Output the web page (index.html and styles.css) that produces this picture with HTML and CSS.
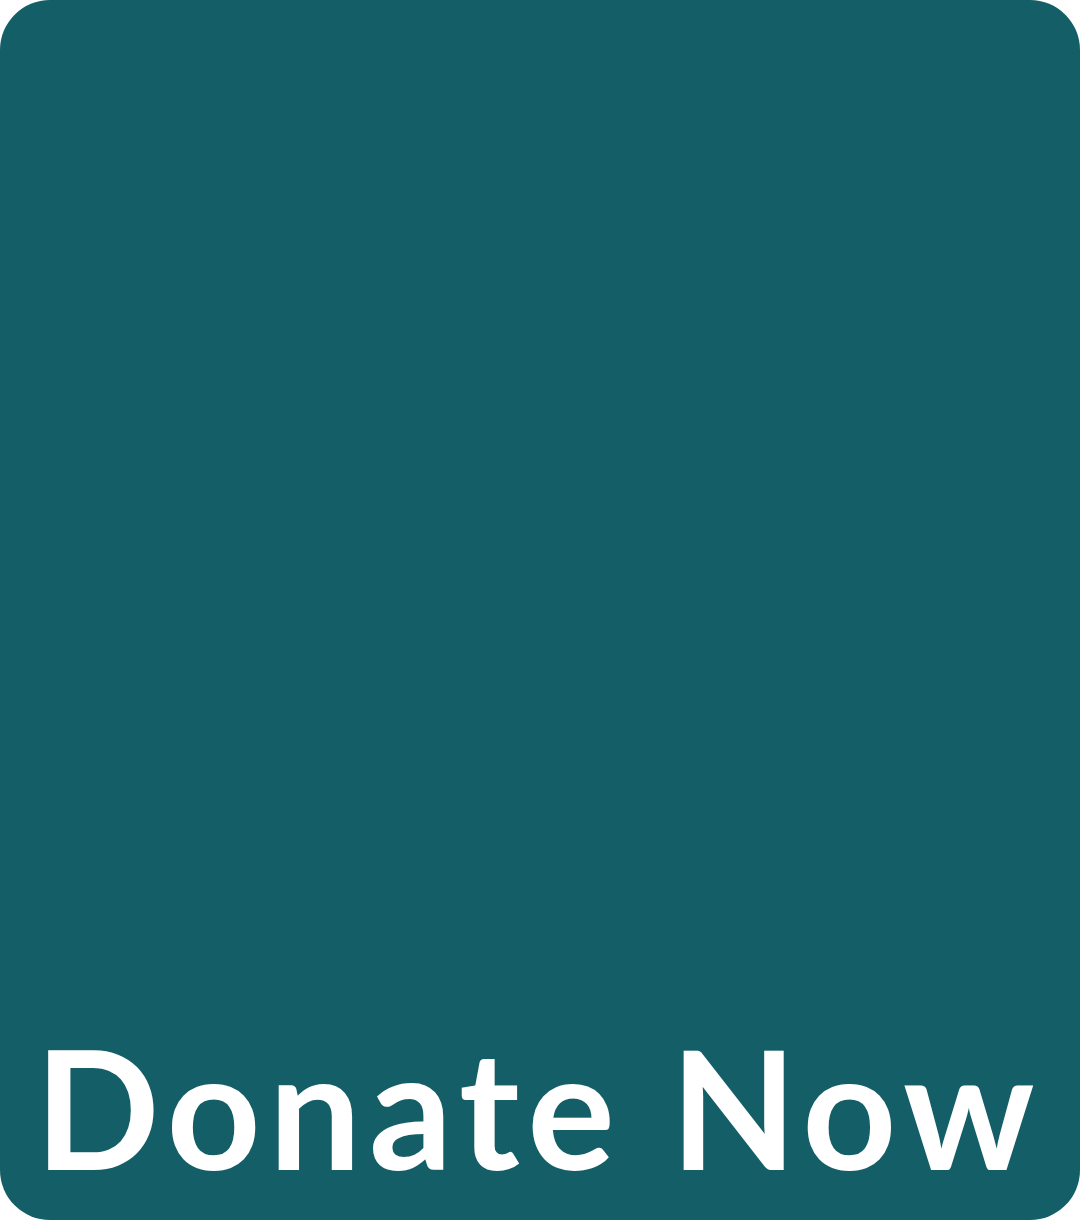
FILE: index.html
```html
<!DOCTYPE html>
<html lang="en">
<head>
<meta charset="utf-8">
<title>Donate Now</title>
<link rel="stylesheet" href="styles.css">
</head>
<body>
<main class="card">
  <h1 class="label">Donate Now</h1>
</main>
</body>
</html>
```
FILE: styles.css
```css
html, body {
  margin: 0;
  padding: 0;
  background: #ffffff;
}
.card {
  box-sizing: border-box;
  width: 1080px;
  height: 1220px;
  background: #135e67;
  border-radius: 50px;
  display: flex;
  flex-direction: column;
  justify-content: flex-end;
  padding: 0 0 31px 35px;
}
.label {
  margin: 0;
  font-family: "Lato", "Noto Sans", sans-serif;
  font-weight: 700;
  font-size: 164px;
  line-height: 1;
  color: #ffffff;
  white-space: nowrap;
  letter-spacing: 7.9px;
}
```
